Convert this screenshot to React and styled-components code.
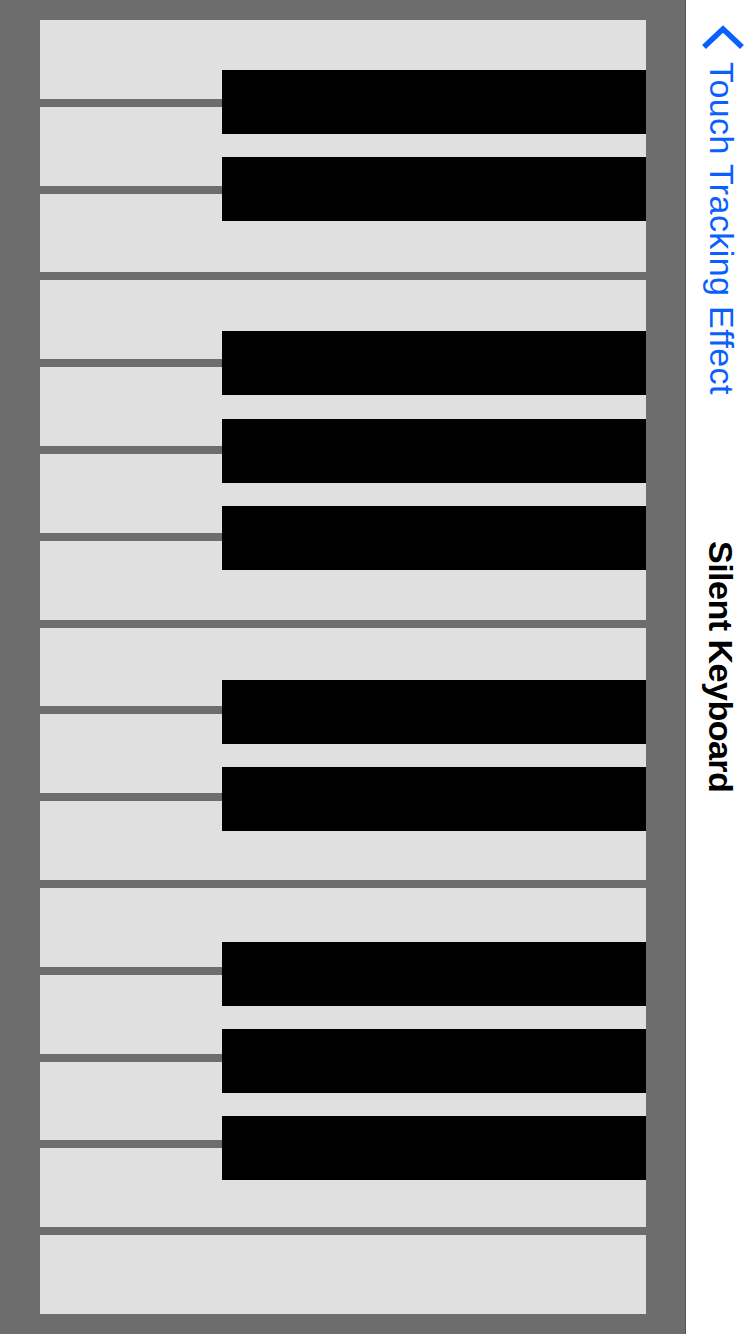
import React from "react";
import styled, { createGlobalStyle } from "styled-components";

const GlobalStyle = createGlobalStyle`
  html, body {
    margin: 0;
    padding: 0;
    background: #ffffff;
  }
  * {
    box-sizing: border-box;
  }
`;

const Screen = styled.div`
  display: flex;
  width: 750px;
  height: 1334px;
  overflow: hidden;
  font-family: "Liberation Sans", Arial, sans-serif;
`;

const KeyboardArea = styled.div`
  flex: 1;
  background: #6d6d6d;
  padding: 20px 39px 20px 40px;
`;

const Keyboard = styled.div`
  display: flex;
  flex-direction: column;
  gap: 8px;
  height: 100%;
`;

const WhiteKey = styled.div`
  position: relative;
  flex: 1;
  background: #e0e0e0;
`;

// black key sits over the gap below its white key, drifting down a little per key
const BlackKey = styled.div`
  position: absolute;
  z-index: 1;
  left: 182px;
  right: 0;
  top: calc(100% - ${(p) => p.$lift}px);
  height: 64px;
  background: #000000;
`;

const NavBar = styled.div`
  width: 65px;
  height: 100%;
  background: #ffffff;
  border-left: 1px solid #555555;
  padding-left: 6px;
  display: grid;
  grid-template-rows: 1fr auto 1fr;
  justify-items: center;
`;

const BackButton = styled.div`
  align-self: start;
  display: flex;
  flex-direction: column;
  align-items: center;
  gap: 12px;
  padding-top: 20px;
  padding-left: 2px;
  color: #0a60ff;
`;

const Chevron = styled.svg`
  display: block;
  width: 44px;
  height: 30px;
  margin-left: 2px;
`;

const BackLabel = styled.span`
  writing-mode: vertical-rl;
  font-size: 34px;
  letter-spacing: 0.4px;
  line-height: 1;
  white-space: nowrap;
`;

const Title = styled.span`
  writing-mode: vertical-rl;
  font-size: 34px;
  font-weight: 700;
  letter-spacing: -0.5px;
  line-height: 1;
  color: #000000;
  white-space: nowrap;
`;

const notes = ["C", "D", "E", "F", "G", "A", "B", "C", "D", "E", "F", "G", "A", "B", "C"];
const hasSharp = (note, i) => i < notes.length - 1 && ["C", "D", "F", "G", "A"].includes(note);

export default function App() {
  return (
    <Screen>
      <GlobalStyle />
      <KeyboardArea>
        <Keyboard>
          {notes.map((note, i) => (
            <WhiteKey key={i}>
              {hasSharp(note, i) && <BlackKey $lift={29.17 - 0.37 * (i + 1)} />}
            </WhiteKey>
          ))}
        </Keyboard>
      </KeyboardArea>
      <NavBar>
        <BackButton>
          <Chevron viewBox="0 0 44 30">
            <path
              d="M3 27 L22 9 L41 27"
              fill="none"
              stroke="currentColor"
              strokeWidth="5.5"
              strokeLinejoin="miter"
            />
          </Chevron>
          <BackLabel>Touch Tracking Effect</BackLabel>
        </BackButton>
        <Title>Silent Keyboard</Title>
        <div />
      </NavBar>
    </Screen>
  );
}
